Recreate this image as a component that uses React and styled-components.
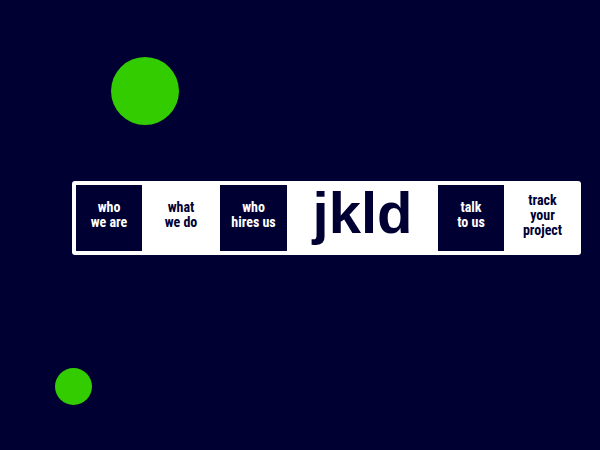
//? Imports ************************************************************************************************************************
import styled, { createGlobalStyle } from "styled-components";
//! Imports ***********************************************************************************************************************

const theme = {
  navy: "#000033",
  green: "#33cc00",
  white: "#ffffff",
};

const App = () => {
  return (
    <>
      <GlobalStyle />
      <Page>
        <Dot $size={68} $left={111} />
        <NavBar aria-label="Main">
          <NavLink href="#who-we-are" $dark>
            who
            <br />
            we are
          </NavLink>
          <NavLink href="#what-we-do">
            what
            <br />
            we do
          </NavLink>
          <NavLink href="#who-hires-us" $dark>
            who
            <br />
            hires us
          </NavLink>
          <Logo href="#home">jkld</Logo>
          <NavLink href="#talk-to-us" $dark>
            talk
            <br />
            to us
          </NavLink>
          <NavLink href="#track-your-project">
            track
            <br />
            your
            <br />
            project
          </NavLink>
        </NavBar>
        <Dot $size={37} $left={55} />
      </Page>
    </>
  );
};

//? Styled Components ************************************************************************************************************************
const GlobalStyle = createGlobalStyle`
  * {
    box-sizing: border-box;
  }
  body {
    margin: 0;
    background-color: ${theme.navy};
  }
`;

const Page = styled.main`
  display: flex;
  flex-direction: column;
  padding: 57px 19px 0 0;
`;

const Dot = styled.div`
  width: ${({ $size }) => $size}px;
  height: ${({ $size }) => $size}px;
  margin-left: ${({ $left }) => $left}px;
  border-radius: 50%;
  background-color: ${theme.green};
`;

const NavBar = styled.nav`
  display: grid;
  grid-template-columns: 66fr 78fr 67fr 151fr 66fr 77fr;
  margin: 56px 0 113px 72px;
  padding: 4px 0 4px 4px;
  border-radius: 3px;
  background-color: ${theme.white};
`;

const NavLink = styled.a`
  display: flex;
  align-items: center;
  justify-content: center;
  min-height: 66px;
  padding-bottom: 6px;
  font-family: "Roboto Condensed", Roboto, sans-serif;
  font-size: 14px;
  font-weight: bold;
  line-height: 15px;
  text-align: center;
  text-decoration: none;
  color: ${({ $dark }) => ($dark ? theme.white : theme.navy)};
  background-color: ${({ $dark }) => ($dark ? theme.navy : theme.white)};
`;

const Logo = styled.a`
  display: flex;
  justify-content: center;
  height: 66px;
  font-family: "Liberation Sans", Arial, sans-serif;
  font-size: 58px;
  font-weight: bold;
  line-height: 56px;
  text-decoration: none;
  color: ${theme.navy};
`;

//! Styled Components ******************************************************************************************************************

export default App;
